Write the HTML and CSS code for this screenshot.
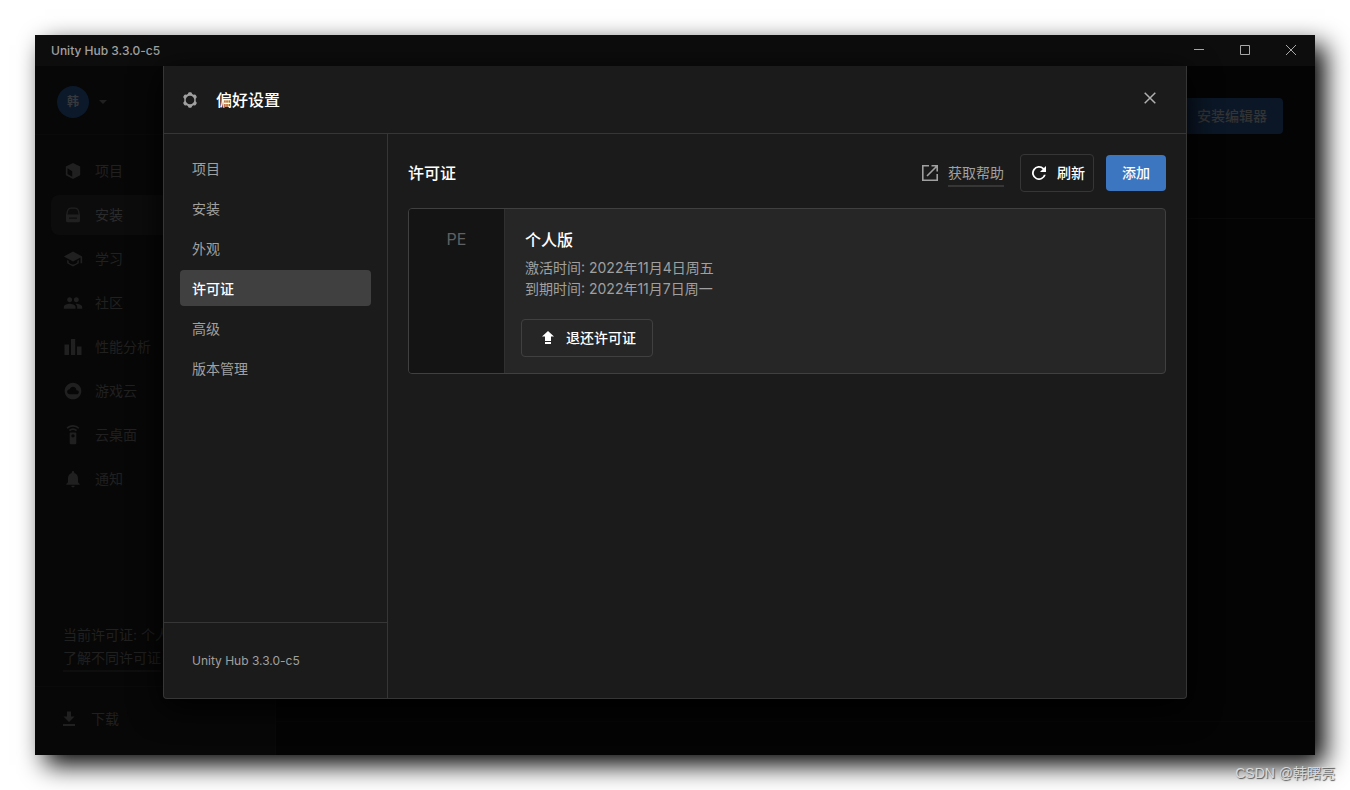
FILE: index.html
```html
<!DOCTYPE html>
<html lang="zh-CN">
<head>
<meta charset="utf-8">
<meta name="viewport" content="width=device-width, initial-scale=1">
<title>Unity Hub 3.3.0-c5</title>
<link rel="stylesheet" href="styles.css">
</head>
<body>
<div class="window">
  <header class="titlebar">
    <span class="titlebar-name">Unity Hub 3.3.0-c5</span>
    <div class="titlebar-controls">
      <button type="button" aria-label="最小化"><svg width="10" height="10" viewBox="0 0 10 10"><path d="M0 4.500h10"/></svg></button>
      <button type="button" aria-label="最大化"><svg width="10" height="10" viewBox="0 0 10 10"><path d="M.5.5h9v9h-9z"/></svg></button>
      <button type="button" aria-label="关闭窗口"><svg width="10" height="10" viewBox="0 0 10 10"><path d="M0 0l10 10M10 0L0 10"/></svg></button>
    </div>
  </header>

  <div class="workspace">
    <aside class="sidebar">
      <div class="account">
        <span class="avatar">韩</span>
        <svg class="caret" width="8" height="4" viewBox="0 0 8 4"><path d="M0 0h8L4 4z"/></svg>
      </div>
      <nav class="main-nav">
        <a href="#"><svg viewBox="0 0 20 20"><path fill-rule="evenodd" d="M10 2l7.200 3.600v8.600L10 18l-7.200-3.800V5.600zM4.500 7.300v5.600l4.700 2.900V10.200z"/></svg>项目</a>
        <a href="#" class="current"><svg viewBox="0 0 20 20"><path fill-rule="evenodd" d="M8 2.500h4c2.300 0 3.600 1.500 4.200 3.700L17 10v5.800a1.500 1.500 0 0 1-1.500 1.500h-11A1.500 1.500 0 0 1 3 15.800V10l.8-3.800C4.400 4 5.700 2.500 8 2.500zM8 3.700C6.300 3.700 5.400 4.900 5 6.500L4.500 9.500h11l-.5-3c-.4-1.600-1.300-2.800-3-2.800zM6 12.500v1.300h8v-1.300z"/></svg>安装</a>
        <a href="#"><svg viewBox="0 0 24 24"><path d="M5 13.180v4L12 21l7-3.820v-4l-1.800 1v2.100c-3 3-7.400 3-10.400 0v-2.100zM12 3L1 9l11 6 9-4.910V17h2V9z"/></svg>学习</a>
        <a href="#"><svg viewBox="0 0 24 24"><path d="M16 11c1.660 0 2.990-1.340 2.990-3S17.660 5 16 5s-3 1.340-3 3 1.340 3 3 3zm-8 0c1.660 0 2.990-1.340 2.990-3S9.660 5 8 5 5 6.340 5 8s1.340 3 3 3zm0 2c-2.330 0-7 1.170-7 3.500V19h14v-2.500C15 14.170 10.330 13 8 13zm8 0c-.29 0-.62.020-.97.050 1.160.84 1.970 1.970 1.970 3.450V19h6v-2.500c0-2.330-4.670-3.500-7-3.500z"/></svg>社区</a>
        <a href="#"><svg viewBox="0 0 20 20"><path d="M1.500 7.500H6V18H1.500zM8 2h4.200v16H8zM14 9.500h4.500V18H14z"/></svg>性能分析</a>
        <a href="#"><svg viewBox="0 0 24 24"><path d="M12 2C6.480 2 2 6.480 2 12s4.480 10 10 10 10-4.480 10-10S17.520 2 12 2zm4.500 14H8c-1.660 0-3-1.340-3-3s1.340-3 3-3l.14.010C8.580 8.280 10.130 7 12 7c2.210 0 4 1.790 4 4h.5c1.380 0 2.500 1.120 2.500 2.500S17.880 16 16.500 16z"/></svg>游戏云</a>
        <a href="#"><svg viewBox="0 0 24 24"><path d="M15 9H9c-.55 0-1 .45-1 1v12c0 .55.450 1 1 1h6c.55 0 1-.45 1-1V10c0-.55-.45-1-1-1zm-3 6c-1.100 0-2-.9-2-2s.9-2 2-2 2 .9 2 2-.9 2-2 2zM7.050 6.050l1.410 1.410a5 5 0 0 1 7.080 0l1.410-1.410a7 7 0 0 0-9.900 0zM12 0C8.960 0 6.210 1.230 4.220 3.220l1.410 1.410a9 9 0 0 1 12.740 0l1.410-1.410A11 11 0 0 0 12 0z"/></svg>云桌面</a>
        <a href="#"><svg viewBox="0 0 24 24"><path d="M12 22c1.100 0 2-.9 2-2h-4c0 1.100.9 2 2 2zm6-6v-5c0-3.070-1.640-5.640-4.500-6.320V4a1.500 1.500 0 0 0-3 0v.68C7.630 5.360 6 7.920 6 11v5l-2 2v1h16v-1z"/></svg>通知</a>
      </nav>
      <div class="license-note">
        <span>当前许可证: 个人版</span>
        <a href="#">了解不同许可证</a>
      </div>
      <a href="#" class="downloads"><svg viewBox="0 0 20 20"><path d="M8 2.500h4v5h3.500L10 13 4.500 7.500H8zM4 15h12v2H4z"/></svg>下载</a>
    </aside>
    <main class="installs">
      <div class="installs-header"><button type="button">安装编辑器</button></div>
      <div class="installs-footer"></div>
    </main>

    <section class="dialog" role="dialog" aria-labelledby="dialog-title">
      <header class="dialog-header">
        <svg class="gear" width="16" height="16" viewBox="0 0 16 16"><path fill-rule="evenodd" d="M7 .3h2q.5 0 .7.600l.5 1.200 1.300.7 1.400-.2q.5 0 .8.400l.9 1.600q.3.500 0 .9L13.700 6.700v2.600l.9 1.200q.3.400 0 .9l-.9 1.600q-.3.400-.8.400l-1.400-.2-1.300.7-.5 1.200q-.2.600-.7.600H7q-.5 0-.7-.6l-.5-1.200-1.300-.7-1.400.2q-.5 0-.8-.4l-.9-1.600q-.3-.5 0-.9l.9-1.200V6.700l-.9-1.200q-.3-.4 0-.9l.9-1.600q.3-.4.8-.4l1.400.2 1.300-.7.5-1.200Q6.500.3 7 .3zM8 3.700a4.300 4.300 0 1 0 0 8.600 4.300 4.300 0 0 0 0-8.600z"/></svg>
        <h1 id="dialog-title">偏好设置</h1>
        <button type="button" class="dialog-close" aria-label="关闭"><svg width="12" height="12" viewBox="0 0 12 12"><path d="M.7.7l10.600 10.600M11.300.7L.7 11.300"/></svg></button>
      </header>
      <div class="dialog-body">
        <aside class="settings">
          <nav class="settings-nav">
            <a href="#">项目</a>
            <a href="#">安装</a>
            <a href="#">外观</a>
            <a href="#" class="selected" aria-current="page">许可证</a>
            <a href="#">高级</a>
            <a href="#">版本管理</a>
          </nav>
          <footer class="version">Unity Hub 3.3.0-c5</footer>
        </aside>
        <div class="panel">
          <div class="panel-header">
            <h2>许可证</h2>
            <a href="#" class="help"><svg width="16" height="16" viewBox="0 0 16 16"><path d="M7 .8H.8v14.400h14.400V9M9.500.8h5.700v5.700M15 1L5 11"/></svg><span>获取帮助</span></a>
            <div class="actions">
              <button type="button" class="button refresh"><svg viewBox="0 0 20 20"><path d="M14.950 5.050A7 7 0 1 0 16.760 11.800H14.900A5.200 5.200 0 1 1 13.650 6.350L11 9h6V3z"/></svg>刷新</button>
              <button type="button" class="button primary">添加</button>
            </div>
          </div>
          <article class="card">
            <div class="card-code">PE</div>
            <div class="card-main">
              <div class="card-text">
                <h3>个人版</h3>
                <p>激活时间: 2022年11月4日周五</p>
                <p>到期时间: 2022年11月7日周一</p>
              </div>
              <button type="button" class="button return"><svg viewBox="0 0 20 20"><path d="M10 3l6 5.500h-3V13H7V8.500H4zM7 14h6v2H7z"/></svg>退还许可证</button>
            </div>
          </article>
        </div>
      </div>
    </section>
  </div>
</div>
<div class="watermark">CSDN @韩曙亮</div>
</body>
</html>
```
FILE: styles.css
```css
* { box-sizing: border-box; }

body {
  position: relative;
  min-height: 100vh;
  margin: 0;
  padding: 35px;
  display: flex;
  background: #fff;
  color: #a0a0a0;
  font: 14px/20px Inter, "Noto Sans CJK SC", sans-serif;
}

h1, h2, h3, p { margin: 0; }
h1, h2, h3 { font-size: 16px; font-weight: 500; color: #fff; }
a { color: inherit; text-decoration: none; }
button { margin: 0; padding: 0; border: 0; background: none; color: inherit; font: inherit; cursor: pointer; }
svg { flex: none; fill: currentColor; }

.window {
  flex: 1;
  min-width: 0;
  display: flex;
  flex-direction: column;
  background: #040404;
  box-shadow: 10px 10px 24px #000;
}

.titlebar {
  height: 31px;
  padding: 0 1px 0 16px;
  display: flex;
  align-items: center;
  justify-content: space-between;
  background: #0d0d0d;
}
.titlebar-name { font-size: 12px; font-weight: 500; }
.titlebar-controls { display: flex; height: 100%; }
.titlebar-controls button { width: 46px; padding-bottom: 1px; display: grid; place-items: center; }
.titlebar-controls svg { fill: none; stroke: #a8a8a8; }

.workspace { position: relative; flex: 1; display: flex; }

.sidebar {
  width: 241px;
  display: flex;
  flex-direction: column;
  border-right: 1px solid #090909;
  background: #070707;
  color: #202020;
}
.sidebar svg { width: 20px; height: 20px; }
.account {
  height: 69px;
  padding: 4px 22px 0;
  display: flex;
  align-items: center;
  gap: 10px;
  border-bottom: 1px solid #0a0a0a;
}
.avatar {
  width: 32px;
  height: 32px;
  display: grid;
  place-items: center;
  border-radius: 50%;
  background: #0c192b;
  color: #35393d;
  font-size: 12px;
  font-weight: 700;
}
.account .caret { width: 8px; height: 4px; }
.main-nav { flex: 1; padding: 16px; display: flex; flex-direction: column; gap: 4px; }
.main-nav a { height: 40px; padding: 0 12px; display: flex; align-items: center; gap: 12px; border-radius: 8px; }
.main-nav .current { background: #0c0c0c; color: #2b2b2b; }
.main-nav .current svg { color: #202020; }
.license-note { padding: 0 28px 14px; display: flex; flex-direction: column; align-items: flex-start; gap: 3px; }
.license-note a { padding-bottom: 2px; border-bottom: 2px solid #0e0e0e; }
.downloads {
  height: 69px;
  padding: 0 24px 4px;
  display: flex;
  align-items: center;
  gap: 12px;
  border-top: 1px solid #0a0a0a;
}

.installs { flex: 1; display: flex; flex-direction: column; justify-content: space-between; }
.installs-header { height: 153px; padding: 32px; display: flex; justify-content: flex-end; align-items: flex-start; border-bottom: 1px solid #0a0a0a; }
.installs-header button { height: 36px; padding: 0 16px; border-radius: 4px; background: #0b1727; color: #333; font-weight: 500; }
.installs-footer { height: 34px; border-top: 1px solid #070707; }

.dialog {
  position: absolute;
  inset: 0 128px 56px;
  display: flex;
  flex-direction: column;
  border: 1px solid #363636;
  border-top: 0;
  border-radius: 0 0 4px 4px;
  background: #1b1b1b;
  box-shadow: 0 8px 32px #000;
}
.dialog-header { height: 68px; padding: 0 30px 0 18px; display: flex; align-items: center; gap: 18px; border-bottom: 1px solid #363636; }
.dialog-close { width: 12px; height: 12px; margin: 0 0 4px auto; display: grid; }
.dialog-close svg { fill: none; stroke: #b0b0b0; stroke-width: 1.5; }
.dialog-body { flex: 1; display: flex; }

.settings { width: 224px; display: flex; flex-direction: column; border-right: 1px solid #363636; }
.settings-nav { flex: 1; padding: 16px; display: flex; flex-direction: column; gap: 4px; }
.settings-nav a { padding: 9px 12px 7px; border-radius: 4px; }
.settings-nav .selected { background: #404040; color: #fff; font-weight: 500; }
.version { padding: 28px 28px 27px; border-top: 1px solid #363636; font-size: 12px; }

.panel { flex: 1; padding: 20px; }
.panel-header { margin-bottom: 16px; display: flex; align-items: center; }
.help { margin: 0 16px 0 auto; display: flex; align-items: center; gap: 10px; }
.help svg { fill: none; stroke: currentColor; stroke-width: 1.6; }
.help span { padding: 4px 0 2px; border-bottom: 2px solid #363636; }
.actions { display: flex; align-items: center; gap: 12px; }

.button { display: flex; align-items: center; gap: 8px; border-radius: 4px; color: #fff; font-weight: 500; }
.button svg { width: 20px; height: 20px; }
.refresh { padding: 8px; border: 1px solid #363636; }
.primary { padding: 8px 16px; background: #3d76c0; }
.return { padding: 8px 16px; border: 1px solid #404040; }

.card { display: flex; overflow: hidden; border: 1px solid #404040; border-radius: 4px; background: #262626; }
.card-code { width: 96px; padding-top: 20px; border-right: 1px solid #303030; background: #141414; color: #606060; font-size: 16px; text-align: center; }
.card-main { padding: 16px; display: flex; flex-direction: column; align-items: flex-start; gap: 16px; }
.card-text { padding: 4px; }
.card-text h3 { margin-bottom: 6px; line-height: 22px; }
.card-text p { line-height: 21px; }

.watermark {
  position: absolute;
  right: 15px;
  bottom: 7px;
  color: #d8d8d8;
  font-family: "Liberation Sans", "Noto Sans CJK SC", sans-serif;
  text-shadow: 1px 1px 1px #555;
}
```
